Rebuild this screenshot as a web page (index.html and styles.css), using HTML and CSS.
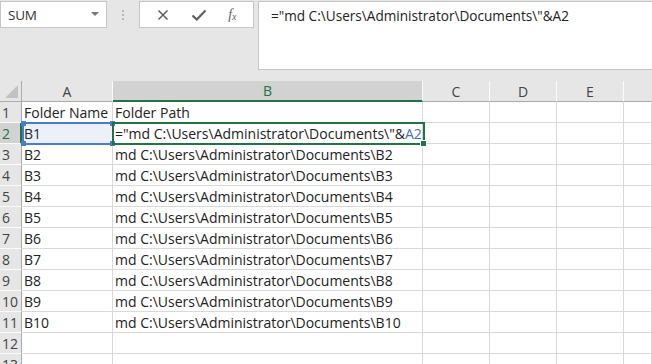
FILE: index.html
```html
<!DOCTYPE html>
<html>
<head>
<meta charset="utf-8">
<link rel="stylesheet" href="styles.css">
</head>
<body>
<div class="app">
  <div class="topbar">
    <div class="namebox">
      <span class="name">SUM</span>
      <span class="caret"></span>
    </div>
    <div class="grip"><i></i><i></i><i></i></div>
    <div class="buttons">
      <svg class="ico" width="14" height="14" viewBox="0 0 14 14"><path d="M2.5 2.5 L11.5 11.5 M11.5 2.5 L2.5 11.5" stroke="#5f5f5f" stroke-width="1.5" fill="none"/></svg>
      <svg class="ico" width="16" height="14" viewBox="0 0 16 14"><path d="M1.5 7.5 L5.8 11.5 L14.5 2.5" stroke="#5f5f5f" stroke-width="2.2" fill="none"/></svg>
      <span class="fx">f<sub>x</sub></span>
    </div>
    <div class="formula">="md C:\Users\Administrator\Documents\"&amp;A2</div>
  </div>
  <div class="sheet">
    <div class="hd corner"><span class="tri"></span></div>
    <div class="hd col">A</div>
    <div class="hd col selcol">B</div>
    <div class="hd col">C</div>
    <div class="hd col">D</div>
    <div class="hd col">E</div>
    <div class="hd col last"></div>

    <div class="hd row">1</div><div class="c">Folder Name</div><div class="c">Folder Path</div><div class="c"></div><div class="c"></div><div class="c"></div><div class="c"></div>
    <div class="hd row selrow">2</div><div class="c">B1</div><div class="c">="md C:\Users\Administrator\Documents\"&amp;<span class="ref">A2</span></div><div class="c"></div><div class="c"></div><div class="c"></div><div class="c"></div>
    <div class="hd row">3</div><div class="c">B2</div><div class="c">md C:\Users\Administrator\Documents\B2</div><div class="c"></div><div class="c"></div><div class="c"></div><div class="c"></div>
    <div class="hd row">4</div><div class="c">B3</div><div class="c">md C:\Users\Administrator\Documents\B3</div><div class="c"></div><div class="c"></div><div class="c"></div><div class="c"></div>
    <div class="hd row">5</div><div class="c">B4</div><div class="c">md C:\Users\Administrator\Documents\B4</div><div class="c"></div><div class="c"></div><div class="c"></div><div class="c"></div>
    <div class="hd row">6</div><div class="c">B5</div><div class="c">md C:\Users\Administrator\Documents\B5</div><div class="c"></div><div class="c"></div><div class="c"></div><div class="c"></div>
    <div class="hd row">7</div><div class="c">B6</div><div class="c">md C:\Users\Administrator\Documents\B6</div><div class="c"></div><div class="c"></div><div class="c"></div><div class="c"></div>
    <div class="hd row">8</div><div class="c">B7</div><div class="c">md C:\Users\Administrator\Documents\B7</div><div class="c"></div><div class="c"></div><div class="c"></div><div class="c"></div>
    <div class="hd row">9</div><div class="c">B8</div><div class="c">md C:\Users\Administrator\Documents\B8</div><div class="c"></div><div class="c"></div><div class="c"></div><div class="c"></div>
    <div class="hd row">10</div><div class="c">B9</div><div class="c">md C:\Users\Administrator\Documents\B9</div><div class="c"></div><div class="c"></div><div class="c"></div><div class="c"></div>
    <div class="hd row">11</div><div class="c">B10</div><div class="c">md C:\Users\Administrator\Documents\B10</div><div class="c"></div><div class="c"></div><div class="c"></div><div class="c"></div>
    <div class="hd row">12</div><div class="c"></div><div class="c"></div><div class="c"></div><div class="c"></div><div class="c"></div><div class="c"></div>
    <div class="hd row">13</div><div class="c"></div><div class="c"></div><div class="c"></div><div class="c"></div><div class="c"></div><div class="c"></div>

    <div class="refbox"><i class="k tl"></i><i class="k tr"></i><i class="k bl"></i><i class="k br"></i></div>
    <div class="editbox"><i class="h"></i></div>
  </div>
</div>
</body>
</html>
```

FILE: styles.css
```css
html, body { margin: 0; padding: 0; }
body {
  width: 652px; height: 364px; overflow: hidden;
  background: #ffffff;
  font-family: "Open Sans", "Noto Sans", sans-serif;
}
.app { width: 652px; }
.topbar {
  background: #e6e6e6;
  height: 81px;
  display: flex;
  align-items: flex-start;
  padding-top: 1px;
  box-sizing: border-box;
}
.namebox {
  width: 107px; height: 27px;
  box-sizing: border-box;
  background: #fff;
  border: 1px solid #c6c6c6;
  display: flex; align-items: center; justify-content: space-between;
  padding: 0 7px 0 7px;
}
.name { font-size: 13.5px; color: #333; letter-spacing: -0.2px; }
.caret {
  width: 0; height: 0;
  border-left: 4px solid transparent; border-right: 4px solid transparent;
  border-top: 4px solid #777;
  margin-top: -2px;
}
.grip {
  width: 32px; height: 27px;
  display: flex; flex-direction: column; align-items: center; justify-content: center; gap: 2px;
}
.grip i { width: 2px; height: 2px; background: #b8b8b8; display: block; }
.buttons {
  width: 115px; height: 27px; box-sizing: border-box;
  background: #fff; border: 1px solid #c6c6c6;
  display: flex; align-items: center; justify-content: space-around;
  padding: 0 6px;
}
.fx { font-family: "Liberation Serif", serif; font-style: italic; font-size: 14px; color: #5f5f5f; line-height: 1; }
.fx sub { font-size: 10px; vertical-align: -1px; }
.formula {
  margin-left: 4px;
  flex: 1; height: 69px; box-sizing: border-box;
  background: #fff; border: 1px solid #c6c6c6; border-right: none;
  font-size: 13.6px; color: #222;
  padding: 4px 0 0 12px;
  line-height: 20px;
}
.sheet {
  position: relative;
  display: grid;
  grid-template-columns: 22px 91px 310px 67px 67px 67px 28px;
  grid-auto-rows: 21px;
  font-size: 14px;
  color: #222;
}
.c {
  box-sizing: border-box;
  border-right: 1px solid #d9d9d9;
  border-bottom: 1px solid #d9d9d9;
  padding: 1px 0 0 2px;
  line-height: 19px;
  white-space: nowrap;
  overflow: visible;
}
.hd {
  box-sizing: border-box;
  background: #e6e6e6;
  color: #444;
  text-align: center;
  padding-top: 1px;
  line-height: 19px;
  font-size: 14px;
}
.col { border-right: 1px solid #fafafa; border-bottom: 1px solid #ababab; }
.col.last { border-right: none; }
.row { border-bottom: 1px solid #fafafa; border-right: 1px solid #ababab; text-align: left; padding-left: 2px; }
.corner { border-bottom: 1px solid #ababab; border-right: 1px solid #ababab; position: relative; }
.tri {
  position: absolute; right: 3px; bottom: 3px;
  width: 0; height: 0;
  border-left: 13px solid transparent;
  border-bottom: 13px solid #c2c2c2;
}
.selcol { background: #d2d2d2; color: #217346; border-bottom: 2px solid #217346; line-height: 18px; }
.selrow { background: #d2d2d2; color: #217346; border-right: 2px solid #217346; }
.ref { color: #4472c4; }
.refbox {
  position: absolute; left: 22px; top: 41px; width: 92px; height: 23px;
  box-sizing: border-box;
  border: 2px solid #4a7ccb;
  background: rgba(68,114,196,0.10);
}
.k { position: absolute; width: 5px; height: 5px; background: #4a7ccb; }
.k.tl { left: -3px; top: -3px; }
.k.tr { right: -3px; top: -3px; }
.k.bl { left: -3px; bottom: -3px; }
.k.br { right: -3px; bottom: -3px; }
.editbox {
  position: absolute; left: 112px; top: 41px; width: 313px; height: 23px;
  box-sizing: border-box;
  border: 2px solid #217346;
}
.h { position: absolute; right: -4px; bottom: -4px; width: 5px; height: 5px; background: #217346; border: 1px solid #fff; }
```
